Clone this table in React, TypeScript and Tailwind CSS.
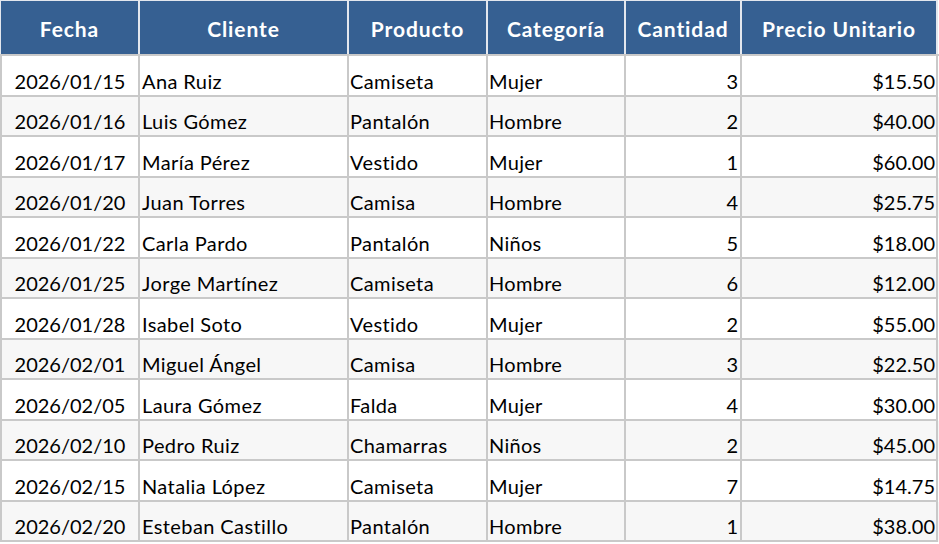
const rows = [
  ["2026/01/15", "Ana Ruiz", "Camiseta", "Mujer", "3", "$15.50"],
  ["2026/01/16", "Luis Gómez", "Pantalón", "Hombre", "2", "$40.00"],
  ["2026/01/17", "María Pérez", "Vestido", "Mujer", "1", "$60.00"],
  ["2026/01/20", "Juan Torres", "Camisa", "Hombre", "4", "$25.75"],
  ["2026/01/22", "Carla Pardo", "Pantalón", "Niños", "5", "$18.00"],
  ["2026/01/25", "Jorge Martínez", "Camiseta", "Hombre", "6", "$12.00"],
  ["2026/01/28", "Isabel Soto", "Vestido", "Mujer", "2", "$55.00"],
  ["2026/02/01", "Miguel Ángel", "Camisa", "Hombre", "3", "$22.50"],
  ["2026/02/05", "Laura Gómez", "Falda", "Mujer", "4", "$30.00"],
  ["2026/02/10", "Pedro Ruiz", "Chamarras", "Niños", "2", "$45.00"],
  ["2026/02/15", "Natalia López", "Camiseta", "Mujer", "7", "$14.75"],
  ["2026/02/20", "Esteban Castillo", "Pantalón", "Hombre", "1", "$38.00"],
];

const headers = ["Fecha", "Cliente", "Producto", "Categoría", "Cantidad", "Precio Unitario"];

const cols = "grid grid-cols-[140px_209px_139px_138px_116px_196px]";

// alignment per column: date centered, text left, numbers right
const align = [
  "justify-center",
  "justify-start pl-[2px] tracking-[0.4px]",
  "justify-start pl-[1px] tracking-[0.4px]",
  "justify-start pl-[1px] tracking-[0.3px]",
  "justify-end pr-[2px]",
  "justify-end pr-[1px]",
];

export default function App() {
  return (
    <div className="w-[939px] h-[544px] bg-white font-['Lato','Liberation_Sans',sans-serif] text-[20px] text-black">
      <div className={cols}>
        {headers.map((h, i) => (
          <div
            key={h}
            className={`h-[54px] flex items-center justify-center pt-[2px] bg-[#366092] text-[21px] tracking-[0.9px] font-bold text-white border-t border-r-2 border-[#e3e7ee] whitespace-nowrap ${
              i === 0 ? "border-l" : ""
            }`}
          >
            {h}
          </div>
        ))}
      </div>

      <div className="border-t-2 border-[#c9c9c9]">
        {rows.map((r, ri) => (
          <div key={ri} className={`${cols} ${ri % 2 === 1 ? "bg-[#f7f7f7]" : "bg-white"}`}>
            {r.map((cell, ci) => (
              <div
                key={ci}
                className={`h-[40.5px] flex items-end pb-[2px] leading-[1.2] border-r-2 border-b-2 border-[#c9c9c9] whitespace-nowrap ${
                  align[ci]
                } ${ci === 0 ? "border-l-2" : ""}`}
              >
                {cell}
              </div>
            ))}
          </div>
        ))}
      </div>
    </div>
  );
}
